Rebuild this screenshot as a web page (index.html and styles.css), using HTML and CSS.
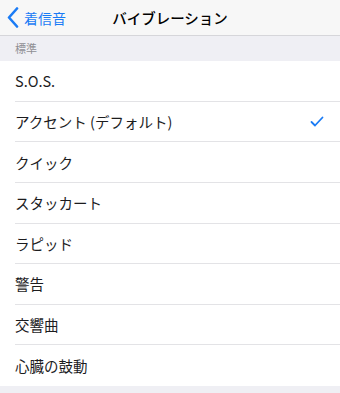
FILE: index.html
```html
<!DOCTYPE html>
<html lang="ja">
<head>
<meta charset="utf-8">
<link rel="stylesheet" href="styles.css">
</head>
<body>
<div class="nav">
  <div class="back">
    <svg class="chev" width="12" height="21" viewBox="0 0 12 21"><path d="M10 1.5 L2 10.5 L10 19.5" fill="none" stroke="#1a7bf5" stroke-width="2.6" stroke-linecap="round" stroke-linejoin="round"/></svg>
    <span>着信音</span>
  </div>
  <div class="title">バイブレーション</div>
</div>
<div class="section">標準</div>
<div class="list">
  <div class="row"><span>S.O.S.</span></div>
  <div class="row"><span>アクセント (デフォルト)</span>
    <svg class="check" width="14" height="11" viewBox="0 0 14 11"><path d="M1.5 6 L5 9.5 L12.5 1.5" fill="none" stroke="#1a7bf5" stroke-width="1.8" stroke-linecap="round" stroke-linejoin="round"/></svg>
  </div>
  <div class="row"><span>クイック</span></div>
  <div class="row"><span>スタッカート</span></div>
  <div class="row"><span>ラピッド</span></div>
  <div class="row"><span>警告</span></div>
  <div class="row"><span>交響曲</span></div>
  <div class="row last"><span>心臓の鼓動</span></div>
</div>
</body>
</html>
```
FILE: styles.css
```css
html, body {
  margin: 0;
  padding: 0;
  background: #efeff4;
  font-family: "Noto Sans CJK JP", "Noto Sans", sans-serif;
  -webkit-font-smoothing: antialiased;
}
.nav {
  height: 35px;
  background: #f7f7f7;
  border-bottom: 1px solid #d6d6da;
  position: relative;
  display: flex;
  align-items: center;
}
.back {
  display: flex;
  align-items: center;
  gap: 5px;
  padding-left: 7px;
  color: #1a7bf5;
  font-size: 14px;
}
.chev { display: block; }
.title {
  position: absolute;
  left: 0;
  right: 0;
  top: 0;
  height: 35px;
  display: flex;
  align-items: center;
  justify-content: center;
  font-size: 14.5px;
  font-weight: 500;
  color: #000;
  pointer-events: none;
}
.section {
  height: 25px;
  box-sizing: border-box;
  padding: 6px 0 0 15px;
  font-size: 11px;
  color: #8e8e93;
  line-height: 12px;
}
.list {
  background: #fff;
  padding-left: 15px;
}
.row {
  height: 40.625px;
  box-sizing: border-box;
  border-bottom: 1px solid #e3e3e6;
  display: flex;
  align-items: center;
  justify-content: space-between;
  padding-right: 16px;
  font-size: 14.5px;
  color: #1c1c1e;
}
.row.last { border-bottom: none; }
.check { display: block; }
```
